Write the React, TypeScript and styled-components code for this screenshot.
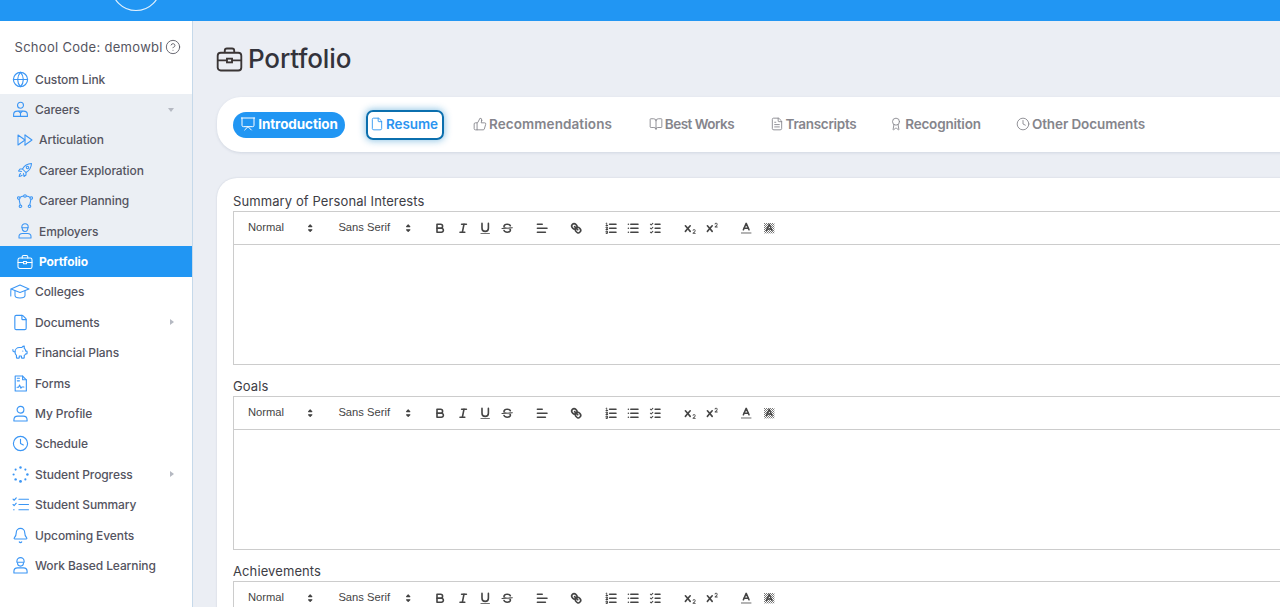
import React from "react"
import styled, { createGlobalStyle } from "styled-components"
import {
  Award,
  Bell,
  BookOpen,
  CircleHelp,
  Clock,
  File,
  FileText,
  Globe,
  PiggyBank,
  Presentation,
  ThumbsUp,
} from "lucide-react"

const GlobalStyle = createGlobalStyle`
  html, body {
    margin: 0;
    height: 100%;
    overflow: hidden;
    background: #ebeef4;
    font-family: Inter, "Liberation Sans", sans-serif;
  }
  * { box-sizing: border-box; }
`

const Page = styled.div`
  width: 1280px;
  height: 607px;
  overflow: hidden;
  display: flex;
  flex-direction: column;
`

const Header = styled.header`
  height: 21px;
  flex: none;
  background: #2196f3;
  overflow: hidden;
  display: flex;
  align-items: flex-end;
  padding: 0 0 9px 100px;
`

const LogoMark = styled.svg`
  width: 360px;
  height: 40px;
  flex: none;
`

const Body = styled.div`
  flex: 1;
  display: flex;
  min-height: 0;
`

const Sidebar = styled.aside`
  width: 193px;
  flex: none;
  background: #fff;
  border-right: 1px solid #c6d9ea;
  padding-top: 10px;
`

const SchoolCode = styled.div`
  height: 32px;
  padding-left: 14.5px;
  display: flex;
  align-items: center;
  gap: 2px;
  font-size: 13px;
  letter-spacing: 0.3px;
  color: #55555f;
  margin-bottom: 1px;

  svg {
    width: 16px;
    height: 16px;
    stroke-width: 1.3;
  }
`

const Row = styled.div<{ $nested?: boolean; $active?: boolean; $tinted?: boolean }>`
  height: 30.4px;
  display: flex;
  align-items: center;
  padding-left: ${(p) => (p.$nested ? "17px" : "12px")};
  padding-right: 18px;
  gap: 6px;
  font-size: 12px;
  font-weight: ${(p) => (p.$active ? 700 : 500)};
  letter-spacing: -0.1px;
  color: ${(p) => (p.$active ? "#fff" : "#54545f")};
  background: ${(p) => (p.$active ? "#2196f3" : p.$tinted ? "#ebeff4" : "transparent")};

  svg.icon {
    width: ${(p) => (p.$nested ? "16px" : "17px")};
    height: ${(p) => (p.$nested ? "16px" : "17px")};
    flex: none;
    fill: none;
    stroke: ${(p) => (p.$active ? "#fff" : "#3b96f5")};
    stroke-width: 1.05;
    stroke-linecap: round;
    stroke-linejoin: round;
  }

  svg.icon.lucide {
    stroke-width: 1.6;
  }

  svg.icon.wide {
    width: 20px;
    margin: 0 -1px 0 -2px;
  }
`

const RowLabel = styled.span`
  flex: 1;
`

const Caret = styled.span<{ $open?: boolean }>`
  width: 0;
  height: 0;
  border-style: solid;
  border-color: transparent;
  ${(p) =>
    p.$open
      ? "border-width: 4px 3.5px 0; border-top-color: #b5b9c2;"
      : "border-width: 3.5px 0 3.5px 4px; border-left-color: #b5b9c2;"}
`

const Main = styled.main`
  flex: 1;
  min-width: 0;
  padding: 0 0 0 24px;
  background: #ebeef4;
  display: flex;
  flex-direction: column;
`

const Title = styled.h1`
  margin: 22px 0 0;
  height: 32px;
  flex: none;
  display: flex;
  align-items: center;
  gap: 5px;
  font-size: 26px;
  line-height: 32px;
  font-weight: 500;
  letter-spacing: -0.15px;
  color: #33333b;

  svg {
    width: 27px;
    height: 27px;
    margin-left: -1px;
    fill: none;
    stroke: #3a3535;
    stroke-width: 1.1;
  }
`

const TabCard = styled.nav`
  margin-top: 22px;
  height: 55px;
  flex: none;
  background: #fff;
  border-radius: 24px 0 0 24px;
  box-shadow: 0 1px 3px rgba(60, 80, 110, 0.14);
  display: flex;
  align-items: center;
  padding-left: 16px;
  margin-right: -10px;
`

const Tab = styled.a<{ $active?: boolean; $focused?: boolean; $w: number; $track: number }>`
  width: ${(p) => p.$w}px;
  height: ${(p) => (p.$focused ? 30 : 26)}px;
  flex: none;
  display: flex;
  align-items: center;
  justify-content: center;
  gap: 2px;
  padding-bottom: 1px;
  font-size: 13.5px;
  font-weight: ${(p) => (p.$active ? 700 : 600)};
  letter-spacing: ${(p) => p.$track}px;
  white-space: nowrap;
  border-radius: ${(p) => (p.$focused ? "7px" : "13px")};
  color: ${(p) => (p.$active ? "#fff" : p.$focused ? "#2a94f0" : "#85858c")};
  background: ${(p) => (p.$active ? "#2196f3" : "transparent")};
  border: ${(p) => (p.$focused ? "2px solid #0b6fae" : "none")};
  box-shadow: ${(p) => (p.$focused ? "0 0 7px 1px rgba(20, 130, 200, 0.45)" : "none")};

  svg {
    width: ${(p) => (p.$active ? 16 : 14)}px;
    height: ${(p) => (p.$active ? 16 : 14)}px;
    stroke-width: 1.5;
    flex: none;
    margin-left: ${(p) => (p.$focused ? -2 : 0)}px;
  }
`

const TabGap = styled.span<{ $w: number }>`
  width: ${(p) => p.$w}px;
  flex: none;
`

const FormCard = styled.section`
  margin-top: 26px;
  flex: none;
  height: 600px;
  background: #fff;
  border-radius: 20px 0 0 0;
  box-shadow: 0 0 2px rgba(60, 80, 110, 0.2);
  padding: 13px 0 0 16px;
  margin-right: -10px;
`

const FieldLabel = styled.label`
  display: block;
  height: 20px;
  line-height: 20px;
  font-size: 13px;
  letter-spacing: 0.1px;
  color: #3d3d45;
`

const Editor = styled.div`
  border: 1px solid #ccc;
  border-right: none;
  margin-bottom: 11px;
`

const Toolbar = styled.div`
  height: 33px;
  border-bottom: 1px solid #ccc;
  padding: 6.4px;
  display: flex;
  align-items: center;
  font-family: "Liberation Sans", Arial, sans-serif;
`

const Picker = styled.span<{ $w: number }>`
  width: ${(p) => p.$w}px;
  height: 19.2px;
  flex: none;
  margin-right: 12px;
  padding-left: 7.6px;
  padding-right: 1.5px;
  display: flex;
  align-items: center;
  justify-content: space-between;
  font-size: 11.2px;
  line-height: 17px;
  color: #444;
`

const PickerArrows = styled.svg`
  width: 14.4px;
  height: 14.4px;
  flex: none;
  fill: #444;
  stroke: #444;
  stroke-width: 1.5;
  stroke-linejoin: round;
  stroke-linecap: round;
`

const PickerName = styled.span`
  margin-top: -2px;
`

const ToolGroup = styled.span`
  display: flex;
  margin-right: 12px;
`

const ToolButton = styled.span`
  width: 22.4px;
  height: 19.2px;
  padding: 2.4px 4px;
  flex: none;

  svg {
    display: block;
    width: 14.4px;
    height: 14.4px;
    fill: none;
    stroke: #444;
    stroke-width: 2;
    stroke-linecap: round;
    stroke-linejoin: round;
  }

  svg .thin {
    stroke-width: 1.3;
  }

  svg .solid {
    fill: #444;
    stroke: none;
  }
`

const EditArea = styled.div`
  height: 119px;
`

const portfolioShape = (
  <>
    <rect x="1" y="4" width="14" height="10.500" rx="1.800" />
    <path d="M5.200 4V2.800c0-.8.6-1.300 1.300-1.300h3c.7 0 1.300.5 1.300 1.300V4" />
    <path d="M1 8.500h5.500M9.500 8.500H15" />
    <rect x="6.500" y="7.500" width="3" height="2.200" />
  </>
)

const icons = {
  careers: (
    <svg className="icon" viewBox="0 0 16 16">
      <circle cx="8" cy="4" r="2.800" />
      <path d="M1.500 14.500v-1.600c0-2 1.600-3.400 3.600-3.400h5.800c2 0 3.600 1.400 3.600 3.400v1.600z" />
      <path d="M6.400 9.700 8 11.400l1.600-1.700M8 11.400v3.100" />
    </svg>
  ),
  articulation: (
    <svg className="icon" viewBox="0 0 16 16">
      <path d="M1 3v10l7-5z" />
      <path d="M8 3l7 5-7 5" />
      <path d="M8 3v10" />
    </svg>
  ),
  rocket: (
    <svg className="icon" viewBox="0 0 16 16">
      <path d="M14.500 1.500c-4 .2-7 2-9 5.500l3.500 3.500c3.500-2 5.300-5 5.500-9z" />
      <circle cx="10.500" cy="5.500" r="1.200" />
      <path d="M5.500 7H3L1.500 9l3 .5" />
      <path d="M9 10.500V13l-2 1.500-.5-3" />
      <path d="M3.500 11.500c-1 .8-1.300 2-1.300 3 1 0 2.200-.3 3-1.300" />
    </svg>
  ),
  planning: (
    <svg className="icon" viewBox="0 0 16 16">
      <circle cx="1.800" cy="5" r="1.300" />
      <circle cx="14.200" cy="5" r="1.300" />
      <circle cx="8" cy="3" r="1.300" />
      <circle cx="3.500" cy="13.200" r="1.300" />
      <circle cx="12.500" cy="13.200" r="1.300" />
      <path d="M3 4.400C4 3.600 5.400 3.200 6.700 3M9.300 3c1.300.2 2.700.6 3.700 1.400M2.100 6.300l1.100 5.600M13.900 6.300l-1.100 5.600" />
    </svg>
  ),
  employers: (
    <svg className="icon" viewBox="0 0 16 16">
      <path d="M4.800 4.800V4a3.200 3.200 0 0 1 6.400 0v.8z" />
      <path d="M5.200 5c0 2 1.200 3.400 2.800 3.400S10.800 7 10.800 5" />
      <path d="M2 15v-1.400c0-2 1.400-3.200 3.300-3.200h5.400c1.900 0 3.300 1.200 3.300 3.200V15z" />
    </svg>
  ),
  portfolio: (
    <svg className="icon" viewBox="0 0 16 16">
      {portfolioShape}
    </svg>
  ),
  colleges: (
    <svg className="icon wide" viewBox="0 0 20 16">
      <path d="M10 1.500 19 5.500 10 9 1 5.500z" />
      <path d="M5 7.500V12c0 1.500 2.500 2.500 5 2.500s5-1 5-2.500V7.500" />
      <path d="M1 5.500c-.3 2.500-.3 5-.2 7" />
    </svg>
  ),
  forms: (
    <svg className="icon" viewBox="0 0 16 16">
      <path d="M3 1h7l3.500 3.500V15H3z" />
      <path d="M10 1v3.500h3.500" />
      <path d="M5 3h2M5 5.500h2" />
      <path d="M4.800 11.500h1.400l1-2 1.200 3 .8-1.200h2" />
    </svg>
  ),
  profile: (
    <svg className="icon" viewBox="0 0 16 16">
      <circle cx="8" cy="4.500" r="3.200" />
      <path d="M1.800 15v-1c0-2 1.600-3.500 3.600-3.500h5.200c2 0 3.600 1.500 3.600 3.500v1z" />
    </svg>
  ),
  progress: (
    <svg className="icon" viewBox="0 0 16 16">
      <g fill="#3b96f5" stroke="none">
        <circle cx="8" cy="1.500" r="1.150" />
        <circle cx="12.600" cy="3.400" r="1" />
        <circle cx="14.500" cy="8" r="1.150" />
        <circle cx="12.600" cy="12.600" r="1" />
        <circle cx="8" cy="14.500" r="1.300" />
        <circle cx="3.400" cy="12.600" r="1.150" />
        <circle cx="1.500" cy="8" r="1" />
        <circle cx="3.400" cy="3.400" r="1" />
      </g>
    </svg>
  ),
  summary: (
    <svg className="icon" viewBox="0 0 16 16">
      <path d="M1 3l1 1 2-2.200M1 8l1 1 2-2.200M1.500 13H2" />
      <path d="M6.500 3H15.500M6.500 8H15.500M6.500 13H15.500" />
    </svg>
  ),
  work: (
    <svg className="icon" viewBox="0 0 16 16">
      <path d="M4.600 5V4a3.400 3.400 0 0 1 6.800 0v1z" />
      <path d="M5.200 5.500c0 1.900 1.200 3.100 2.800 3.100s2.800-1.200 2.800-3.100" />
      <path d="M1.800 15v-1.500c0-2 1.500-3.300 3.400-3.300h5.600c1.900 0 3.400 1.300 3.400 3.300V15z" />
    </svg>
  ),
}

const QuillIcons = {
  bold: (
    <>
      <path d="M5,4H9.500A2.500,2.500,0,0,1,12,6.500v0A2.500,2.500,0,0,1,9.500,9H5A0,0,0,0,1,5,9V4A0,0,0,0,1,5,4Z" />
      <path d="M5,9h5.500A2.500,2.500,0,0,1,13,11.500v0A2.500,2.500,0,0,1,10.500,14H5a0,0,0,0,1,0,0V9A0,0,0,0,1,5,9Z" />
    </>
  ),
  italic: (
    <>
      <line x1="7" x2="13" y1="4" y2="4" />
      <line x1="5" x2="11" y1="14" y2="14" />
      <line x1="8" x2="10" y1="14" y2="4" />
    </>
  ),
  underline: (
    <>
      <path d="M5,3V9a4.012,4.012,0,0,0,4,4H9a4.012,4.012,0,0,0,4-4V3" />
      <rect className="solid" height="1" rx="0.5" ry="0.5" width="12" x="3" y="15" />
    </>
  ),
  strike: (
    <>
      <line className="thin" x1="15.500" x2="2.500" y1="8.500" y2="9.500" />
      <path className="solid" d="M9.007,8C6.542,7.791,6,7.519,6,6.500,6,5.792,7.283,5,9,5c1.571,0,2.765.679,2.969,1.309a1,1,0,0,0,1.900-.617C13.356,4.106,11.354,3,9,3,6.200,3,4,4.538,4,6.500a3.200,3.200,0,0,0,.500,1.843Z" />
      <path className="solid" d="M8.984,10C11.457,10.208,12,10.479,12,11.500c0,.708-1.283,1.500-3,1.500-1.571,0-2.765-.679-2.969-1.309a1,1,0,1,0-1.900.617C4.644,13.894,6.646,15,9,15c2.800,0,5-1.538,5-3.500a3.200,3.200,0,0,0-.500-1.843Z" />
    </>
  ),
  align: (
    <>
      <line x1="3" x2="15" y1="9" y2="9" />
      <line x1="3" x2="13" y1="14" y2="14" />
      <line x1="3" x2="9" y1="4" y2="4" />
    </>
  ),
  link: (
    <>
      <line x1="7" x2="11" y1="7" y2="11" />
      <path d="M8.900,4.577a3.476,3.476,0,0,1,.36,4.679A3.476,3.476,0,0,1,4.577,8.900C3.185,7.500,2.035,6.400,4.217,4.217S7.500,3.185,8.900,4.577Z" />
      <path d="M13.423,9.100a3.476,3.476,0,0,0-4.679-.36,3.476,3.476,0,0,0,.36,4.679c1.392,1.392,2.500,2.542,4.679.36S14.815,10.500,13.423,9.100Z" />
    </>
  ),
  ordered: (
    <>
      <line x1="7" x2="15" y1="4" y2="4" />
      <line x1="7" x2="15" y1="9" y2="9" />
      <line x1="7" x2="15" y1="14" y2="14" />
      <line className="thin" x1="2.500" x2="4.500" y1="5.500" y2="5.500" />
      <path className="solid" d="M3.500,6A0.500,0.500,0,0,1,3,5.500V3.085l-0.276.138A0.500,0.500,0,0,1,2.053,3c-0.124-.247-0.023-0.324.224-0.447l1-.5A0.500,0.500,0,0,1,4,2.500v3A0.500,0.500,0,0,1,3.500,6Z" />
      <path className="thin" d="M4.500,10.500h-2c0-.234,1.850-1.076,1.850-2.234A0.959,0.959,0,0,0,2.500,8.156" />
      <path className="thin" d="M2.500,14.846a0.959,0.959,0,0,0,1.850-.109A0.700,0.700,0,0,0,3.750,14a0.688,0.688,0,0,0,.6-0.736,0.959,0.959,0,0,0-1.850-.109" />
    </>
  ),
  bullet: (
    <>
      <line x1="6" x2="15" y1="4" y2="4" />
      <line x1="6" x2="15" y1="9" y2="9" />
      <line x1="6" x2="15" y1="14" y2="14" />
      <line x1="3" x2="3" y1="4" y2="4" />
      <line x1="3" x2="3" y1="9" y2="9" />
      <line x1="3" x2="3" y1="14" y2="14" />
    </>
  ),
  check: (
    <>
      <line x1="9" x2="15" y1="4" y2="4" />
      <polyline className="thin" points="3 4 4 5 6 3" />
      <line x1="9" x2="15" y1="14" y2="14" />
      <polyline className="thin" points="3 14 4 15 6 13" />
      <line x1="9" x2="15" y1="9" y2="9" />
      <polyline className="thin" points="3 9 4 10 6 8" />
    </>
  ),
  sub: (
    <>
      <path className="solid" d="M15.500,15H13.861a3.858,3.858,0,0,0,1.914-2.975,1.800,1.800,0,0,0-1.600-1.751A1.921,1.921,0,0,0,12.021,11.700a0.500,0.500,0,1,0,.957.291h0a0.914,0.914,0,0,1,1.053-.725,0.810,0.810,0,0,1,.744.762c0,1.076-1.170,1.870-1.940,2.431A1.456,1.456,0,0,0,12,15.500a0.500,0.500,0,0,0,.500.500h3A0.500,0.500,0,0,0,15.500,15Z" />
      <path className="solid" d="M9.650,5.241a1,1,0,0,0-1.409.108L6,7.964,3.759,5.349A1,1,0,0,0,2.192,6.592Q2.210,6.600,2.241,6.651L4.684,9.500,2.241,12.350A1,1,0,0,0,3.710,13.707q0.040-.04.050-0.050L6,11.036l2.241,2.614a1,1,0,0,0,1.567-1.243Q9.790,12.400,9.759,12.350L7.316,9.500,9.759,6.651A1,1,0,0,0,9.650,5.241Z" />
    </>
  ),
  super: (
    <>
      <path className="solid" d="M15.500,7H13.861a4.015,4.015,0,0,0,1.914-2.975,1.800,1.800,0,0,0-1.600-1.751A1.922,1.922,0,0,0,12.021,3.700a0.500,0.500,0,1,0,.957.291,0.917,0.917,0,0,1,1.053-.725,0.810,0.810,0,0,1,.744.762c0,1.077-1.164,1.925-1.934,2.486A1.423,1.423,0,0,0,12,7.500a0.500,0.500,0,0,0,.500.500h3A0.500,0.500,0,0,0,15.500,7Z" />
      <path className="solid" d="M9.651,5.241a1,1,0,0,0-1.410.108L6,7.964,3.759,5.349a1,1,0,1,0-1.519,1.300L4.683,9.500,2.241,12.350a1,1,0,1,0,1.519,1.300L6,11.036l2.241,2.614a1,1,0,0,0,1.519-1.300L7.317,9.500,9.759,6.651A1,1,0,0,0,9.651,5.241Z" />
    </>
  ),
  color: (
    <>
      <line x1="3" x2="15" y1="15" y2="15" strokeWidth="1" />
      <polyline points="5.500 11 9 3 12.500 11" />
      <line x1="11.630" x2="6.380" y1="9" y2="9" />
    </>
  ),
  background: (
    <>
      <defs>
        <pattern id="quill-check" width="2.500" height="2.500" patternUnits="userSpaceOnUse">
          <rect width="1.250" height="1.250" fill="#777" stroke="none" />
          <rect x="1.250" y="1.250" width="1.250" height="1.250" fill="#777" stroke="none" />
        </pattern>
      </defs>
      <rect x="2.500" y="2.500" width="13" height="13" fill="url(#quill-check)" stroke="none" />
      <polyline points="5.500 12 9 4 12.500 12" strokeWidth="1.600" />
      <line x1="11.630" x2="6.380" y1="10" y2="10" strokeWidth="1.600" />
    </>
  ),
}

type QuillName = keyof typeof QuillIcons

const toolGroups: QuillName[][] = [
  ["bold", "italic", "underline", "strike"],
  ["align"],
  ["link"],
  ["ordered", "bullet", "check"],
  ["sub", "super"],
  ["color", "background"],
]

const arrows = (
  <PickerArrows viewBox="0 0 18 18">
    <polygon points="7 11 9 13 11 11 7 11" />
    <polygon points="7 7 9 5 11 7 7 7" />
  </PickerArrows>
)

function RichEditor() {
  return (
    <Editor>
      <Toolbar>
        <Picker $w={78.4}>
          <PickerName>Normal</PickerName>
          {arrows}
        </Picker>
        <Picker $w={86.4}>
          <PickerName>Sans Serif</PickerName>
          {arrows}
        </Picker>
        {toolGroups.map((group) => (
          <ToolGroup key={group[0]}>
            {group.map((name) => (
              <ToolButton key={name}>
                <svg viewBox="0 0 18 18">{QuillIcons[name]}</svg>
              </ToolButton>
            ))}
          </ToolGroup>
        ))}
      </Toolbar>
      <EditArea />
    </Editor>
  )
}

const menu = [
  { label: "Custom Link", icon: <Globe className="icon" /> },
  { label: "Careers", icon: icons.careers, tinted: true, caret: "open" },
  { label: "Articulation", icon: icons.articulation, tinted: true, nested: true },
  { label: "Career Exploration", icon: icons.rocket, tinted: true, nested: true },
  { label: "Career Planning", icon: icons.planning, tinted: true, nested: true },
  { label: "Employers", icon: icons.employers, tinted: true, nested: true },
  { label: "Portfolio", icon: icons.portfolio, nested: true, active: true },
  { label: "Colleges", icon: icons.colleges },
  { label: "Documents", icon: <File className="icon" />, caret: "closed" },
  { label: "Financial Plans", icon: <PiggyBank className="icon wide" /> },
  { label: "Forms", icon: icons.forms },
  { label: "My Profile", icon: icons.profile },
  { label: "Schedule", icon: <Clock className="icon" /> },
  { label: "Student Progress", icon: icons.progress, caret: "closed" },
  { label: "Student Summary", icon: icons.summary },
  { label: "Upcoming Events", icon: <Bell className="icon" /> },
  { label: "Work Based Learning", icon: icons.work },
]

const tabs = [
  { label: "Introduction", Icon: Presentation, w: 112, gap: 21, track: -0.1, active: true },
  { label: "Resume", Icon: File, w: 78, gap: 29, track: -0.1, focused: true },
  { label: "Recommendations", Icon: ThumbsUp, w: 139, gap: 36, track: 0.1 },
  { label: "Best Works", Icon: BookOpen, w: 87, gap: 36, track: -0.5 },
  { label: "Transcripts", Icon: FileText, w: 84, gap: 35, track: -0.3 },
  { label: "Recognition", Icon: Award, w: 90, gap: 36, track: -0.2 },
  { label: "Other Documents", Icon: Clock, w: 129, gap: 0, track: -0.1 },
]

export default function App() {
  return (
    <Page>
      <GlobalStyle />
      <Header>
        <LogoMark viewBox="0 0 360 40">
          <circle cx="36" cy="14" r="24.500" fill="none" stroke="#dff0fd" strokeWidth="1.200" />
          <rect x="2" y="9" width="1" height="2" fill="#dff0fd" />
          <path d="M345 10c1 1.500 2.500 1.500 4 .5M352 9.500l1 2" fill="none" stroke="#fff" strokeWidth="1.200" />
        </LogoMark>
      </Header>
      <Body>
        <Sidebar>
          <SchoolCode>
            School Code: demowbl
            <CircleHelp />
          </SchoolCode>
          {menu.map((item) => (
            <Row key={item.label} $nested={item.nested} $active={item.active} $tinted={item.tinted}>
              {item.icon}
              <RowLabel>{item.label}</RowLabel>
              {item.caret && <Caret $open={item.caret === "open"} />}
            </Row>
          ))}
        </Sidebar>
        <Main>
          <Title>
            <svg viewBox="0 0 16 16">{portfolioShape}</svg>
            Portfolio
          </Title>
          <TabCard>
            {tabs.map(({ label, Icon, w, gap, track, active, focused }) => (
              <React.Fragment key={label}>
                <Tab $w={w} $track={track} $active={active} $focused={focused}>
                  <Icon />
                  {label}
                </Tab>
                <TabGap $w={gap} />
              </React.Fragment>
            ))}
          </TabCard>
          <FormCard>
            <FieldLabel>Summary of Personal Interests</FieldLabel>
            <RichEditor />
            <FieldLabel>Goals</FieldLabel>
            <RichEditor />
            <FieldLabel>Achievements</FieldLabel>
            <RichEditor />
          </FormCard>
        </Main>
      </Body>
    </Page>
  )
}
